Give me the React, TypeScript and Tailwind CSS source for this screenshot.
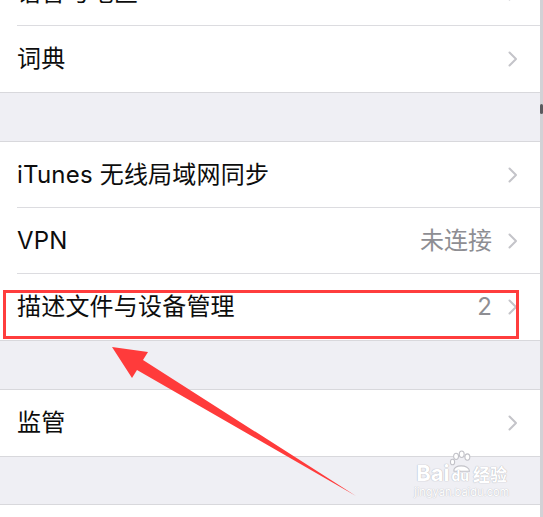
import React from "react";

const font = { fontFamily: "Inter, 'Noto Sans CJK SC', 'Noto Sans', sans-serif" };

function Chevron() {
  return (
    <svg width="10" height="16" viewBox="0 0 10 16" className="shrink-0">
      <path d="M1.5 1.5 L8 8 L1.5 14.5" fill="none" stroke="#c4c4c9" strokeWidth="2" strokeLinecap="round" strokeLinejoin="round" />
    </svg>
  );
}

interface RowProps {
  label: string;
  detail?: string;
  last?: boolean;
  className?: string;
}

function Row({ label, detail, last, className = "" }: RowProps) {
  return (
    <div className={`bg-white pl-[17px] h-[66px] flex ${className}`}>
      <div className={`flex-1 flex items-center pr-[22px] ${last ? "" : "border-b border-[#dcdce0]"}`}>
        <span className="flex-1 text-[24px] leading-none text-[#0d0d0d] tracking-[0.2px]">{label}</span>
        {detail && <span className="text-[24px] leading-none text-[#8e8e93] mr-[16px]">{detail}</span>}
        <Chevron />
      </div>
    </div>
  );
}

function Gap({ h = "h-[50px]" }: { h?: string }) {
  return <div className={`${h} bg-[#efeff4] border-y border-[#d8d8dc]`} />;
}

function Watermark() {
  return (
    <div className="absolute left-[414px] top-[462px] flex flex-col items-center select-none">
      <div className="flex items-end text-[22px] font-bold leading-none text-white" style={{ textShadow: "0 0 1px #b9b9bf, 0 0 1px #b9b9bf" }}>
        <span>Bai</span>
        <span className="relative">
          <svg width="24" height="24" viewBox="0 0 34 34" className="absolute -top-[12px] left-0">
            <g fill="#fff" stroke="#c2c2c8" strokeWidth="1.5">
              <ellipse cx="10" cy="9" rx="3.5" ry="4.5" />
              <ellipse cx="18" cy="6" rx="3.5" ry="4.5" />
              <ellipse cx="26" cy="10" rx="3.5" ry="4.5" />
              <ellipse cx="5" cy="17" rx="3" ry="4" />
              <path d="M7 30 C5 20 29 20 29 30 Z" />
            </g>
          </svg>
          <span className="relative text-[14px] px-[2px]">du</span>
        </span>
        <span className="ml-[2px] text-[17px]" style={font}>经验</span>
      </div>
      <div className="text-[11px] leading-none mt-[3px] text-white" style={{ textShadow: "0 0 1px #c4c4ca, 0 0 1px #c4c4ca" }}>jingyan.baidu.com</div>
    </div>
  );
}

export default function App() {
  return (
    <div className="relative w-[543px] h-[517px] overflow-hidden bg-[#efeff4] flex" style={font}>
      <div className="flex-1 flex flex-col">
        <Row label="语言与地区" className="-mt-[40px]" />
        <Row label="词典" last />
        <Gap />
        <Row label="iTunes 无线局域网同步" />
        <Row label="VPN" detail="未连接" />
        <Row label="描述文件与设备管理" detail="2" last />
        <Gap />
        <Row label="监管" last />
        <Gap h="h-[49px]" />
        <div className="flex-1 bg-white" />
      </div>
      <div className="w-[3px] bg-[#d2d2d6] flex flex-col">
        <div className="h-[104px]" />
        <div className="h-[10px] w-[3px] rounded-full bg-[#5a5a5e]" />
      </div>

      {/* annotation */}
      <div className="absolute left-[3px] top-[290px] w-[516px] h-[49px] border-[3px] border-[#ff3d3d]" />
      <svg className="absolute left-0 top-0" width="543" height="517" viewBox="0 0 543 517">
        <polygon points="112,347 148,352 143,360 356,496 137,370 132,378" fill="#ff3b3b" />
      </svg>
      <Watermark />
    </div>
  );
}
